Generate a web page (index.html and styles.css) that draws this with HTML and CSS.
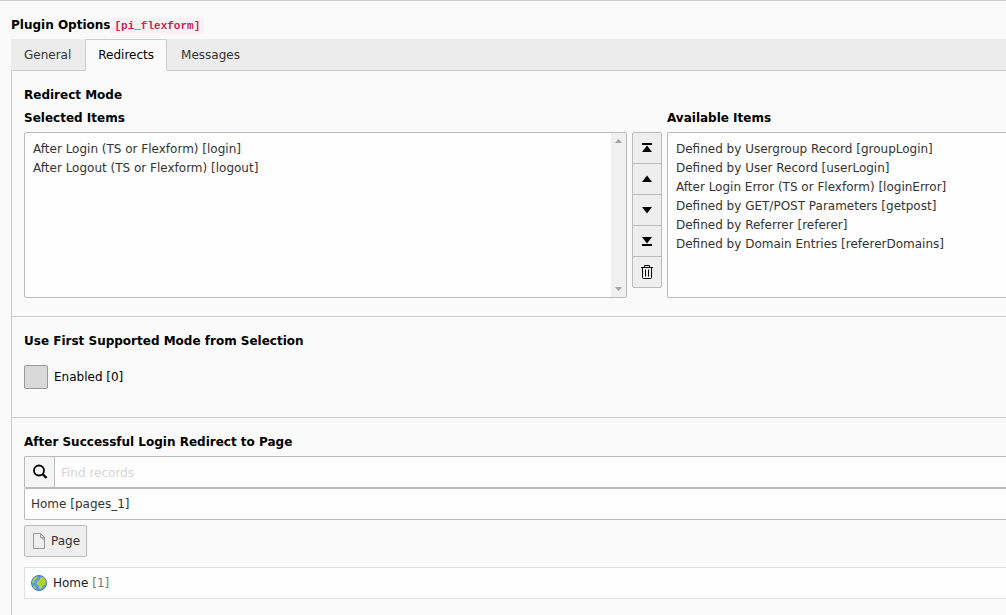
FILE: index.html
```html
<!DOCTYPE html>
<html lang="en">
<head>
<meta charset="utf-8">
<title>Plugin Options</title>
<link rel="stylesheet" href="styles.css">
</head>
<body>
<main class="form">
  <h1 class="form-title">Plugin Options<code class="code">[pi_flexform]</code></h1>
  <nav class="tabs">
    <button class="tab" type="button">General</button>
    <button class="tab tab-active" type="button">Redirects</button>
    <button class="tab" type="button">Messages</button>
  </nav>
  <div class="panel">
    <section class="section section-mode">
      <h2 class="label">Redirect Mode</h2>
      <div class="picker">
        <div class="picker-selected">
          <label class="label" for="selected">Selected Items</label>
          <div class="picker-row">
            <div class="listbox">
              <select class="list" id="selected" size="8">
                <option>After Login (TS or Flexform) [login]</option>
                <option>After Logout (TS or Flexform) [logout]</option>
              </select>
              <div class="scrollbar" aria-hidden="true">
                <svg width="7" height="4"><path d="M0 4L3.500 0L7 4z" fill="#a3a3a3"/></svg>
                <svg width="7" height="4"><path d="M0 0L3.500 4L7 0z" fill="#a3a3a3"/></svg>
              </div>
            </div>
            <div class="tools">
              <button class="tool" type="button" aria-label="Move to top"><svg width="16" height="16"><path d="M3 3h10v2H3zM8 5.500l5 6.500H3z"/></svg></button>
              <button class="tool" type="button" aria-label="Move up"><svg width="16" height="16"><path d="M8 4.500l5 6.500H3z"/></svg></button>
              <button class="tool" type="button" aria-label="Move down"><svg width="16" height="16"><path d="M8 11.500L3 5h10z"/></svg></button>
              <button class="tool" type="button" aria-label="Move to bottom"><svg width="16" height="16"><path d="M3 11h10v2H3zM8 10.500L3 4h10z"/></svg></button>
              <button class="tool" type="button" aria-label="Remove"><svg width="16" height="16"><path d="M2 3.500h12M5.500 3.500v-2h5v2M3.500 4v9.500q0 1 1 1h7q1 0 1-1V4M6.500 5.500v7M9.500 5.500v7" fill="none" stroke="#000"/></svg></button>
            </div>
          </div>
        </div>
        <div class="picker-available">
          <label class="label" for="available">Available Items</label>
          <div class="listbox listbox-open">
            <select class="list" id="available" size="8">
              <option>Defined by Usergroup Record [groupLogin]</option>
              <option>Defined by User Record [userLogin]</option>
              <option>After Login Error (TS or Flexform) [loginError]</option>
              <option>Defined by GET/POST Parameters [getpost]</option>
              <option>Defined by Referrer [referer]</option>
              <option>Defined by Domain Entries [refererDomains]</option>
            </select>
          </div>
        </div>
      </div>
    </section>
    <section class="section section-first">
      <h2 class="label">Use First Supported Mode from Selection</h2>
      <label class="check"><input class="check-box" type="checkbox">Enabled [0]</label>
    </section>
    <section class="section section-page">
      <h2 class="label">After Successful Login Redirect to Page</h2>
      <div class="search">
        <span class="search-icon"><svg width="16" height="16" fill="none" stroke="#000"><circle cx="7" cy="6.500" r="5" stroke-width="1.800"/><path d="M10.500 10L14.500 14" stroke-width="2.400"/></svg></span>
        <input class="search-input" type="text" placeholder="Find records" aria-label="Find records">
      </div>
      <select class="record" aria-label="Selected page"><option>Home [pages_1]</option></select>
      <button class="page-button" type="button"><svg width="16" height="16"><path d="M2.500.500h7l4 4v11h-11z" fill="#efefef" stroke="#999"/><path d="M9.500.500v4h4z" fill="#fff" stroke="#999"/><path d="M10 5h3v3z" fill="#bbb"/></svg>Page</button>
      <div class="page-item"><svg width="16" height="16"><circle cx="8" cy="8" r="7.500" fill="#5599f5" stroke="#4477b5"/><path d="M1.300 6L3 3l3-1.700 1 .700L5.500 4 3.500 5.500 3 8 1.200 8zM5.500 7.500L7 5.500l2-.500L9 3l2-1.500 2.500 2L15 7l-.700 3-1.800 0-1.500 3-2 1.500-1-1.500 0-2.500-2.500-1z" fill="#aed136"/><path d="M1.800 10.500l2 .500 1.500 2-.500 1-2-1.500z" fill="#aed136"/></svg><span>Home <span class="muted">[1]</span></span></div>
    </section>
  </div>
</main>
</body>
</html>
```
FILE: styles.css
```css
* { box-sizing: border-box; }
body {
  margin: 0;
  background: #fafafa;
  color: #000;
  font: 12px/18px "DejaVu Sans", sans-serif;
  overflow-x: hidden;
}
button, input, select { font: inherit; color: inherit; margin: 0; border-radius: 0; }
svg { display: block; flex: none; }
.form { border-top: 1px solid #ccc; padding: 14px 0 0 11px; }
.form-title { margin: 0; height: 24px; font-size: 12px; line-height: 20px; }
.code {
  padding: 2px 4px;
  border-radius: 2px;
  background: #f9f2f4;
  color: #c7254e;
  font: bold 11px/12px "Liberation Mono", monospace;
}
.tabs { display: flex; gap: 1px; height: 32px; background: #ececec; border-bottom: 1px solid #ccc; }
.tab { height: 32px; padding: 0 12px; border: 1px solid transparent; background: none; color: #333; }
.tab-active { background: #fafafa; border-color: #ccc; border-bottom-color: #fafafa; border-radius: 2px 2px 0 0; color: #000; }
.panel { border-left: 1px solid #ccc; }
.section { padding: 15px 0 18px 12px; border-bottom: 1px solid #ccc; }
.section-first { padding-bottom: 28px; }
.section-page { border-bottom: 0; }
.label { display: block; margin: 0; font-size: 12px; font-weight: bold; line-height: 18px; }
.picker { display: flex; gap: 5px; margin-top: 5px; }
.picker-selected { flex: 638; min-width: 0; }
.picker-available { flex: 339; min-width: 0; }
.picker-row { display: flex; gap: 5px; }
.picker-row, .listbox-open { margin-top: 5px; }
.listbox {
  display: flex;
  flex: 1;
  height: 166px;
  border: 1px solid #bbb;
  border-radius: 2px;
  background: #fefefe;
}
.listbox-open { border-right: 0; border-radius: 2px 0 0 2px; }
.list { flex: 1; min-width: 0; padding: 6px 8px; border: 0; background: none; color: #333; overflow: hidden; outline: 0; }
.list option { height: 19px; min-height: 19px; padding: 3px 0 0; line-height: 16px; }
.scrollbar {
  display: flex;
  flex-direction: column;
  align-items: center;
  justify-content: space-between;
  width: 15px;
  padding: 6px 0;
  background: #f0f0f0;
}
.tools { align-self: flex-start; width: 30px; border: 1px solid #bbb; border-radius: 2px; background: #eee; }
.tool { display: flex; align-items: center; justify-content: center; width: 100%; height: 31px; padding: 0; border: 0; background: none; }
.tool:not(:last-child) { border-bottom: 1px solid #bbb; }
.tool:last-child { height: 30px; }
.check { display: flex; align-items: center; gap: 6px; margin-top: 15px; width: max-content; }
.check-box { appearance: none; width: 24px; height: 24px; border: 1px solid #999; border-radius: 2px; background: #d9d9d9; }
.search { display: flex; height: 32px; margin-top: 5px; border: 1px solid #bbb; border-right: 0; border-radius: 2px 0 0 2px; background: #fefefe; }
.search-icon { display: flex; align-items: center; justify-content: center; width: 30px; border-right: 1px solid #bbb; background: #f5f5f5; }
.search-input { flex: 1; min-width: 0; padding: 2px 6px 0; border: 0; background: none; }
.search-input::placeholder { color: #d5d5d5; opacity: 1; }
.record { appearance: none; display: block; width: 100%; height: 32px; padding: 0 6px; border: 1px solid #bbb; border-right: 0; border-radius: 2px 0 0 2px; background: #fefefe; color: #333; }
.page-button { display: flex; align-items: center; gap: 4px; height: 32px; margin-top: 5px; padding: 0 6px; border: 1px solid #bbb; border-radius: 2px; background: #eee; color: #333; }
.page-item { display: flex; align-items: center; gap: 6px; height: 32px; margin-top: 10px; padding: 0 6px; border: 1px solid #ddd; border-right: 0; background: #fefefe; color: #222; }
.muted { color: #777; }
```
